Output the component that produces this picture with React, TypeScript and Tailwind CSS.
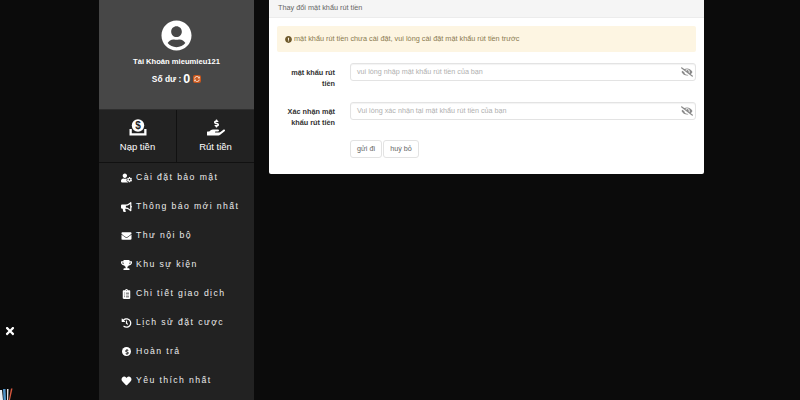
import React from "react";
import { FaUserCircle, FaUserCog, FaBullhorn, FaEnvelope, FaTrophy, FaClipboardList, FaHistory, FaDollarSign, FaHeart, FaExclamationCircle, FaEyeSlash, FaSyncAlt, FaHandHoldingUsd, FaTimes } from "react-icons/fa";

const menu = [
  { icon: FaUserCog, label: "Cài đặt bảo mật" },
  { icon: FaBullhorn, label: "Thông báo mới nhất" },
  { icon: FaEnvelope, label: "Thư nội bộ" },
  { icon: FaTrophy, label: "Khu sự kiện" },
  { icon: FaClipboardList, label: "Chi tiết giao dịch" },
  { icon: FaHistory, label: "Lịch sử đặt cược" },
  { icon: FaDollarSign, label: "Hoàn trả", round: true },
  { icon: FaHeart, label: "Yêu thích nhất" },
];

function Deposit() {
  return (
    <svg width="18" height="17" viewBox="0 0 18 17" className="text-white">
      <circle cx="9" cy="6.5" r="6.2" fill="currentColor" />
      <text x="9" y="10" textAnchor="middle" fontSize="10" fontWeight="700" fill="#222" fontFamily="Liberation Sans">$</text>
      <path d="M0.5 10h2.3v4.2h12.4V10h2.3v6.5H0.5z" fill="currentColor" />
    </svg>
  );
}

function Field({ label, placeholder }: { label: React.ReactNode; placeholder: string }) {
  return (
    <div className="flex items-start h-[26px]">
      <div className="w-[58px] text-right text-[7.3px] leading-[11px] font-bold text-[#333] pt-[4px]">{label}</div>
      <div className="ml-[15px] flex-1 h-[18px] border border-[#e3e3e3] rounded-[3px] bg-white flex items-center justify-between pl-[6px] pr-[2px] shadow-[inset_0_1px_1px_rgba(0,0,0,0.05)]">
        <span className="text-[7.2px] text-[#b0b0b0]">{placeholder}</span>
        <FaEyeSlash className="text-[#8a8a8a] w-[12px] h-[10px]" />
      </div>
    </div>
  );
}

export default function App() {
  return (
    <div className="relative w-[800px] h-[400px] overflow-hidden bg-[#0b0b0b] font-['Liberation_Sans',Arial,sans-serif] flex items-start pl-[99px] gap-[15px]">
      <aside className="w-[155px] h-[400px] shrink-0 bg-[#222222] text-white">
        <div className="h-[110px] bg-[#474747] border-b border-[#2e2e2e] flex flex-col items-center pt-[20px]">
          <FaUserCircle className="w-[31px] h-[31px] text-white" />
          <div className="mt-[6px] text-[7.6px] font-bold leading-[10px]">Tài Khoản mieumieu121</div>
          <div className="mt-[5px] flex items-center h-[14px] text-[8.4px] font-bold">
            <span>Số dư :</span>
            <span className="ml-[2px] text-[12.5px]">0</span>
            <span className="ml-[3px] w-[8px] h-[8px] bg-[#c9561c] rounded-[2px] flex items-center justify-center">
              <FaSyncAlt className="w-[6px] h-[6px] text-[#f2d5c0]" />
            </span>
          </div>
        </div>
        <div className="h-[53px] flex border-b border-[#111]">
          <button className="flex-1 flex flex-col items-center pt-[9px] border-r border-[#111]">
            <Deposit />
            <span className="mt-[4px] text-[9.5px] leading-[13px] text-white">Nạp tiền</span>
          </button>
          <button className="flex-1 flex flex-col items-center pt-[9px]">
            <FaHandHoldingUsd className="w-[18px] h-[17px] text-white" />
            <span className="mt-[4px] text-[9.5px] leading-[13px] text-white">Rút tiền</span>
          </button>
        </div>
        <nav>
          {menu.map(({ icon: Icon, label, round }) => (
            <div key={label} className="h-[29px] flex items-center pl-[22px]">
              <span className="w-[11px] h-[10px] flex items-center justify-center">
                {round ? (
                  <span className="w-[9px] h-[9px] rounded-full bg-white flex items-center justify-center">
                    <Icon className="w-[6px] h-[6px] text-[#222]" />
                  </span>
                ) : (
                  <Icon className="w-[11px] h-[10px] text-white" />
                )}
              </span>
              <span className="ml-[4px] text-[8.7px] tracking-[1.4px] text-[#ececec] whitespace-nowrap">{label}</span>
            </div>
          ))}
        </nav>
      </aside>

      <main className="w-[435px] h-[174px] bg-white rounded-b-[2px]">
        <div className="h-[18px] bg-[#f5f5f5] border-b border-[#ececec] pl-[9px] flex items-center text-[7.3px] text-[#666]">
          Thay đổi mật khẩu rút tiền
        </div>
        <div className="px-[8px] pt-[8px]">
          <div className="h-[26px] bg-[#fdf5e2] rounded-[2px] flex items-center pl-[8px] text-[7.3px] text-[#8a7a50]">
            <FaExclamationCircle className="w-[7px] h-[7px] text-[#6f5a2c] mr-[2px]" />
            <span>mật khẩu rút tiền chưa cài đặt, vui lòng cài đặt mật khẩu rút tiền trước</span>
          </div>
          <div className="mt-[11px] flex flex-col gap-[13px]">
            <Field label={<>mật khẩu rút<br />tiền</>} placeholder="vui lòng nhập mật khẩu rút tiền của bạn" />
            <Field label={<>Xác nhận mật<br />khẩu rút tiền</>} placeholder="Vui lòng xác nhận tại mật khẩu rút tiền của bạn" />
          </div>
          <div className="mt-[12px] ml-[73px] flex gap-[1px]">
            <button className="w-[32px] h-[18px] border border-[#e3e3e3] rounded-[3px] text-[7.2px] text-[#666]">gửi đi</button>
            <button className="w-[36px] h-[18px] border border-[#e3e3e3] rounded-[3px] text-[7.2px] text-[#666]">huỷ bỏ</button>
          </div>
        </div>
      </main>

      <FaTimes className="absolute left-[4px] top-[325px] w-[12px] h-[12px] text-white" />
      <svg className="absolute left-0 top-[388px]" width="14" height="12" viewBox="0 0 14 12">
        <path d="M0 2h2l1 10H0z" fill="#e8eef5" />
        <path d="M3 1h2.5l.5 11H3.5z" fill="#4f93c9" />
        <path d="M7 1h1.5l-.3 11H7z" fill="#e7e2e4" />
        <path d="M11 0.5h1.5L10 12H8.8z" fill="#d8583f" />
      </svg>
    </div>
  );
}
